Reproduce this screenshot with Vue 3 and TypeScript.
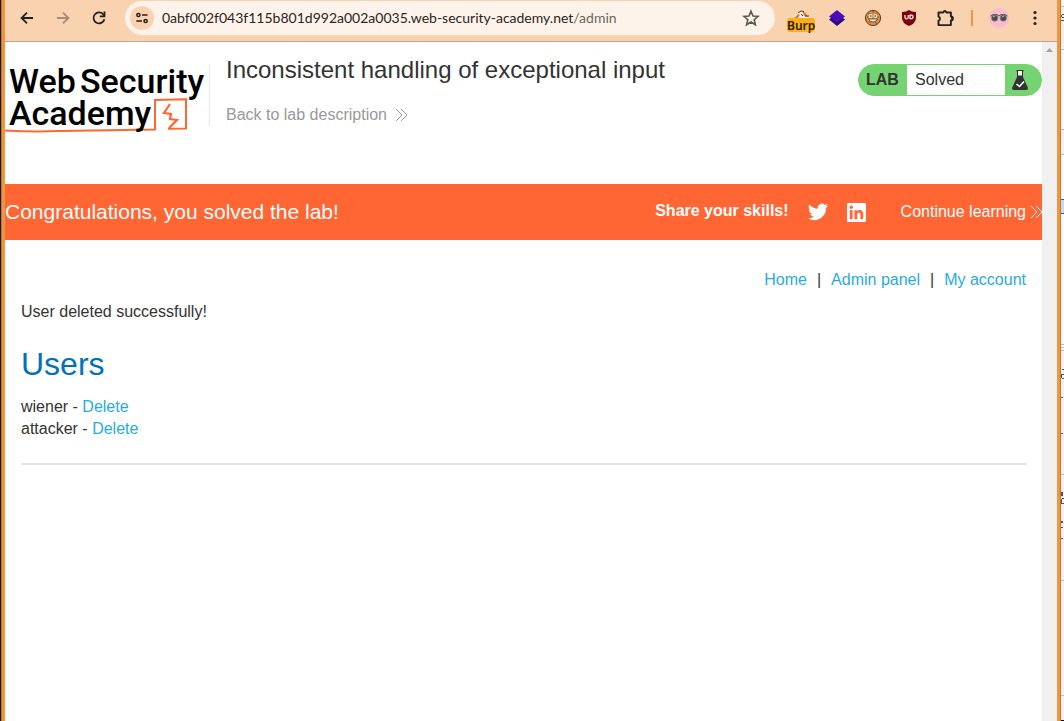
<script setup lang="ts">
import { ref } from 'vue'

interface User { name: string }

const address = ref('0abf002f043f115b801d992a002a0035.web-security-academy.net/admin')
const users: User[] = [{ name: 'wiener' }, { name: 'attacker' }]
const navLinks: string[] = ['Home', 'Admin panel', 'My account']
</script>

<template>
  <div class="desktop">
    <div class="edge edge-left"></div>
    <div class="window">
      <header class="toolbar">
        <button class="tool" aria-label="Back">
          <svg width="16" height="16" viewBox="0 0 16 16" fill="none" stroke="#222" stroke-width="1.8"><path d="M14 8H3M8 2.6 2.6 8 8 13.4" /></svg>
        </button>
        <button class="tool" aria-label="Forward">
          <svg width="16" height="16" viewBox="0 0 16 16" fill="none" stroke="#a38c79" stroke-width="1.8"><path d="M2 8h11M8 2.6 13.4 8 8 13.4" /></svg>
        </button>
        <button class="tool" aria-label="Reload">
          <svg width="16" height="16" viewBox="0 0 16 16" fill="none" stroke="#222" stroke-width="1.8"><path d="M13.4 9.2A5.5 5.5 0 1 1 12.6 4.8L13.5 6" /><path d="M13.5 1.6v4.7H8.8" /></svg>
        </button>
        <div class="address">
          <button class="site" aria-label="Site information">
            <svg width="14" height="14" viewBox="0 0 14 14" fill="none" stroke="#222" stroke-width="1.5"><circle cx="3.4" cy="4" r="1.6" /><path d="M7 4h5.5M1.3 10H7" /><circle cx="10.6" cy="10" r="1.6" /></svg>
          </button>
          <div class="url">
            <input v-model="address" class="url-input" aria-label="Address" spellcheck="false" />
            <div class="url-text" aria-hidden="true">0abf002f043f115b801d992a002a0035.web-security-academy.net<span class="path">/admin</span></div>
          </div>
          <button class="star" aria-label="Bookmark this page">
            <svg width="18" height="18" viewBox="0 0 18 18" fill="none" stroke="#5b5753" stroke-width="1.6"><path d="M9 2.2 11 7l5.1.4-3.9 3.3 1.2 5L9 13l-4.4 2.7 1.2-5L1.900 7.400 7 7z" /></svg>
          </button>
        </div>
        <div class="extensions">
          <button class="ext burp" aria-label="Burp">
            <svg width="18" height="8" viewBox="0 0 18 8"><path d="M1 8 3 5l4-3 4-2 4 4 2 4z" fill="#f7f2eb" /><path d="m2 8 4-4 2 1-2 3zM10 1l4 2 2 4-4-1z" fill="#ef7d21" /><path d="m6 3 3-2 3 .5M9 4l2 2M13 6h4" stroke="#41342c" fill="none" /></svg>
            <span class="burp-badge">Burp</span>
          </button>
          <button class="ext" aria-label="Layers">
            <svg width="18" height="18" viewBox="0 0 18 18"><path d="m1 10.500 8-6 8 6-8 6.500z" fill="#2c0580" /><path d="m1 7.500 8-6.500 8 6.500-8 6z" fill="#4a0dbb" /></svg>
          </button>
          <button class="ext" aria-label="Cookies">
            <svg width="18" height="18" viewBox="0 0 18 18"><circle cx="9" cy="9" r="7.600" fill="#db9148" stroke="#67361c" /><path d="M4 5h3M11 5h3M3 8h2M13 8h2M8 3h2M5 13h2M11 14h2" stroke="#835026" /><circle cx="6.500" cy="7" r="1.900" fill="#fff1d8" /><circle cx="11.500" cy="7" r="1.900" fill="#fff1d8" /><circle cx="6.800" cy="7" r=".8" fill="#261811" /><circle cx="11.200" cy="7" r=".8" fill="#261811" /><path d="M4.500 10h9Q12.500 13 9 13t-4.500-3z" fill="#fff5e4" stroke="#5b3019" stroke-width=".8" /></svg>
          </button>
          <button class="ext" aria-label="Content blocker">
            <svg width="18" height="18" viewBox="0 0 18 18"><path d="M9 1q3 2.200 7 2v6q0 5-7 8-7-3-7-8V3q4 .2 7-2z" fill="#80000b" /><path d="M5 6v2.300q0 1.700 1.600 1.700t1.600-1.700V6M10 6.200v3.500h1q2 0 2-1.800T11 6.200z" stroke="#fff" stroke-width="1.200" fill="none" /></svg>
          </button>
          <button class="ext" aria-label="Extensions">
            <svg width="18" height="18" viewBox="0 0 18 18"><path d="M2.500 3.500H7a2 2 0 0 1 3.600 0h4.300v4a2 2 0 0 1 0 4v4.600H2.500v-4.400a2.100 2.100 0 0 0 0-4z" fill="none" stroke="#222" stroke-width="1.900" stroke-linejoin="round" /><path d="M7 2.800a1.800 1.800 0 0 1 3.600 0zM15.200 7.700a1.800 1.800 0 0 1 0 3.600z" fill="#222" /></svg>
          </button>
        </div>
        <span class="separator"></span>
        <button class="avatar" aria-label="Profile">
          <svg width="20" height="20" viewBox="0 0 20 20"><circle cx="10" cy="10" r="10" fill="#f8bbd0" /><path d="M1.500 8 4 6.500h4l2 1.500 2-1.500h4L18.500 8" stroke="#5b5252" fill="none" /><circle cx="5.700" cy="10" r="3.200" fill="#4a4848" stroke="#8d8585" stroke-width=".8" /><circle cx="14.300" cy="10" r="3.200" fill="#4a4848" stroke="#8d8585" stroke-width=".8" /><path d="m4 9 2-1M13 9l2-1" stroke="#c9c4c4" /></svg>
        </button>
        <button class="menu" aria-label="Menu">
          <svg width="4" height="16" viewBox="0 0 4 16" fill="#222"><circle cx="2" cy="2.500" r="1.600" /><circle cx="2" cy="8" r="1.600" /><circle cx="2" cy="13.500" r="1.600" /></svg>
        </button>
      </header>

      <div class="viewport">
        <div class="page">
          <section class="lab-header">
            <a class="logo" href="#" aria-label="Web Security Academy">
              <svg width="204" height="86" viewBox="0 0 204 86">
                <path d="M0 80.500Q26 82 55 81l95-1.500V50l31-.8v29.300l-18 .3" fill="none" stroke="#f63" stroke-width="2" />
                <path d="m165 54-6 9 7 1-1 5 7 1-8 8" fill="none" stroke="#f63" stroke-width="2.200" />
                <g class="wordmark"><text x="4" y="43">Web</text><text x="75" y="43">Security</text><text x="4" y="75">Academy</text></g>
              </svg>
            </a>
            <div class="titles">
              <h2>Inconsistent handling of exceptional input</h2>
              <a class="back" href="#">Back to lab description
                <svg width="13" height="14" viewBox="0 0 13 14" fill="none" stroke="#999"><path d="m1 1 6 6-6 6M6 1l6 6-6 6" /></svg>
              </a>
            </div>
            <div class="status">
              <span class="status-label">LAB</span>
              <span class="status-value">Solved</span>
              <span class="status-icon">
                <svg width="16" height="20" viewBox="0 0 16 20"><path d="M4.500 0h7v1.500H11V7l5 11q0 2-1.500 2h-13Q0 20 0 18L5 7V1.500h-.5z" fill="#333332" /><path d="M6 1h4v4.500H6z" fill="#eef5ed" /><path d="m4.500 14 3 2.500 4.500-5" stroke="#fff" stroke-width="1.600" fill="none" /></svg>
              </span>
            </div>
          </section>

          <section class="banner">
            <h3>Congratulations, you solved the lab!</h3>
            <strong>Share your skills!</strong>
            <a class="social" href="#" aria-label="Twitter">
              <svg width="20" height="18" viewBox="0 0 24 20" fill="#fff"><path d="M24 2.400a9.800 9.800 0 0 1-2.800.8A4.900 4.900 0 0 0 23.300.5a9.900 9.900 0 0 1-3.100 1.200 4.900 4.900 0 0 0-8.400 4.500A14 14 0 0 1 1.700 1a4.900 4.900 0 0 0 1.500 6.600A4.900 4.900 0 0 1 1 7v.1a4.900 4.900 0 0 0 3.900 4.800 5 5 0 0 1-2.200.1 4.900 4.900 0 0 0 4.600 3.400A9.900 9.900 0 0 1 0 17.500a14 14 0 0 0 21.500-12.400A10 10 0 0 0 24 2.400z" /></svg>
            </a>
            <a class="social" href="#" aria-label="LinkedIn">
              <svg width="19" height="19" viewBox="0 0 24 24"><rect width="24" height="24" rx="1.500" fill="#fff" /><path d="M3.500 9h3.600v11.500H3.500z" fill="#f63" /><circle cx="5.300" cy="5.400" r="2.100" fill="#f63" /><path d="M9.400 9h3.400v1.600C14 8 20.500 7.600 20.500 14v6.500H17v-5.700c0-4.200-4-3.600-4 0v5.700H9.400z" fill="#f63" /></svg>
            </a>
            <a class="continue" href="#">Continue learning
              <svg width="12" height="14" viewBox="0 0 12 14" fill="none" stroke="#fff"><path d="m1 1 6 6-6 6M6 1l6 6-6 6" /></svg>
            </a>
          </section>

          <main>
            <nav>
              <template v-for="(link, index) in navLinks" :key="link">
                <span v-if="index > 0">|</span>
                <a href="#">{{ link }}</a>
              </template>
            </nav>
            <p class="message">User deleted successfully!</p>
            <h1>Users</h1>
            <ul>
              <li v-for="user in users" :key="user.name">{{ user.name }} - <a href="#">Delete</a></li>
            </ul>
            <hr />
          </main>
        </div>
        <div class="scrollbar">
          <svg width="7" height="4" viewBox="0 0 7 4"><path d="M0 4 3.500 0 7 4z" fill="#a3a3a3" /></svg>
        </div>
      </div>
    </div>
    <div class="edge edge-right"></div>
    <svg class="behind" width="3" viewBox="0 0 3 721" preserveAspectRatio="xMinYMin slice" aria-hidden="true">
      <path d="M0 0h3v721H0z" fill="#fafafa" />
      <path d="M0 7h3v42H0zM0 130h3v24H0zM0 351h3v370H0z" fill="#f0f0f0" />
      <path d="M0 6h3v1H0zM0 49h3v1H0zM0 129h3v1H0zM0 154h3v1H0zM0 344h3v1H0zM0 347h3v1H0zM0 350h3v1H0zM0 474h3v1H0zM0 580h3v1H0zM0 695h3v1H0z" fill="#bdbdbd" />
      <path d="M0 199h3v15H0z" fill="#335c94" />
      <path d="M0 200h3v13H0z" fill="#c9d8ef" />
      <path d="M1 14h2v1H1zM0 15h1v2H0zM1 17h2v1H1zM0 20h3v1H0zM1 369h2v1H1zM0 374h3v1H0zM0 375h1v3H0zM1 378h2v1H1zM0 397h2v1H0zM0 433h2v1H0zM0 492h2v4H0zM1 498h2v1H1zM0 499h1v4H0zM0 503h3v1H0zM0 521h2v2H0zM0 527h2v1H0zM0 538h2v1H0z" fill="#555" />
      <path d="M0 720h3v1H0z" fill="#111" />
    </svg>
  </div>
</template>

<style>
html, body { margin: 0; }
</style>

<style scoped>
* { box-sizing: border-box; }
.desktop { display: flex; min-height: 100vh; font: 16px/22px "Liberation Sans", Arial, sans-serif; color: #333332; background: #fff; }
a { color: #29abe2; text-decoration: none; }
button { border: 0; padding: 0; margin: 0; background: none; display: flex; align-items: center; justify-content: center; flex: none; }
svg { display: block; flex: none; }
.edge { flex: none; background: #f1953f; }
.edge-left { width: 5px; border-left: 1px solid #1b1a20; box-shadow: inset 1px 0 #bd7733; }
.edge-right { width: 4px; border-right: 1px solid #c47830; }
.behind { align-self: stretch; height: 100vh; }
.window { flex: 1; min-width: 0; display: flex; flex-direction: column; }
.toolbar { display: flex; align-items: center; height: 42px; padding: 0 12px 6px 4px; background: #f9d2af; border-bottom: 1px solid #bda58e; }
.tool { width: 36px; height: 34px; }
.address { flex: 1; min-width: 0; height: 34px; margin-left: 8px; padding: 0 15px 0 5px; border-radius: 17px; background: #fef3ea; display: flex; align-items: center; }
.site { width: 24px; height: 24px; border-radius: 50%; background: #f9d2af; }
.url { flex: 1; min-width: 0; display: grid; margin-left: 8px; font: 14px/20px Lato, "Noto Sans", sans-serif; }
.url-input, .url-text { grid-area: 1 / 1; font: inherit; min-width: 0; white-space: nowrap; overflow: hidden; }
.url-input { border: 0; padding: 0; background: transparent; color: transparent; outline: 0; }
.url-text { color: #2b2521; pointer-events: none; }
.path { color: #6e655f; }
.extensions { display: flex; margin-left: 8px; }
.ext { width: 36px; height: 34px; }
.burp { flex-direction: column; justify-content: flex-end; padding-bottom: 3px; }
.burp-badge { width: 28px; height: 14px; border-radius: 3px; background: #ffae19; color: #2b2008; font: 600 12px/15px "Noto Sans", sans-serif; text-align: center; }
.separator { width: 2px; height: 16px; margin-left: 8px; background: #f1953f; }
.avatar { margin-left: 16px; }
.menu { width: 20px; height: 34px; margin-left: 16px; }
.viewport { flex: 1; display: flex; background: #fff; }
.page { flex: 1; min-width: 0; }
.scrollbar { width: 15px; background: #f0f0f0; display: flex; justify-content: center; padding-top: 6px; }
.lab-header { display: flex; align-items: flex-start; height: 142px; padding-top: 8px; }
.logo { width: 204px; }
.wordmark { font: 500 34px "Roboto", sans-serif; fill: #000; }
.titles { flex: 1; min-width: 0; height: 62px; margin-top: 14px; padding-left: 16px; border-left: 1px solid #e6e6e6; }
h2 { margin: -8px 0 20px; font-size: 24px; line-height: 28px; font-weight: 400; }
.back { display: flex; align-items: center; gap: 8px; color: #999; }
.status { display: flex; width: 184px; height: 32px; margin-top: 14px; border: 1px solid #75d371; border-radius: 16px; background: #75d371; line-height: 30px; overflow: hidden; }
.status-label { width: 48px; padding-left: 7px; font-weight: 700; }
.status-value { flex: 1; padding-left: 8px; background: #fff; }
.status-icon { width: 36px; display: flex; align-items: center; padding-left: 7px; }
.banner { display: flex; align-items: center; height: 56px; background: #f63; color: #fff; overflow: hidden; }
h3 { flex: 1; margin: 0; font-size: 21px; line-height: 28px; font-weight: 400; }
.banner strong { padding-bottom: 2px; }
.social { width: 20px; margin-left: 19px; }
.continue { display: flex; align-items: center; gap: 4px; margin-left: 34px; color: #fff; }
main { padding: 0 16px; }
nav { display: flex; justify-content: flex-end; gap: 10px; padding-top: 29px; }
.message { margin: 10px 0 0; }
h1 { margin: 23px 0 14px; font-size: 32px; line-height: 36px; font-weight: 400; color: #0071bc; }
ul { list-style: none; margin: 0 0 23px; padding: 0; }
hr { margin: 0; border: 0; height: 2px; background: #e5e5e5; }
</style>
